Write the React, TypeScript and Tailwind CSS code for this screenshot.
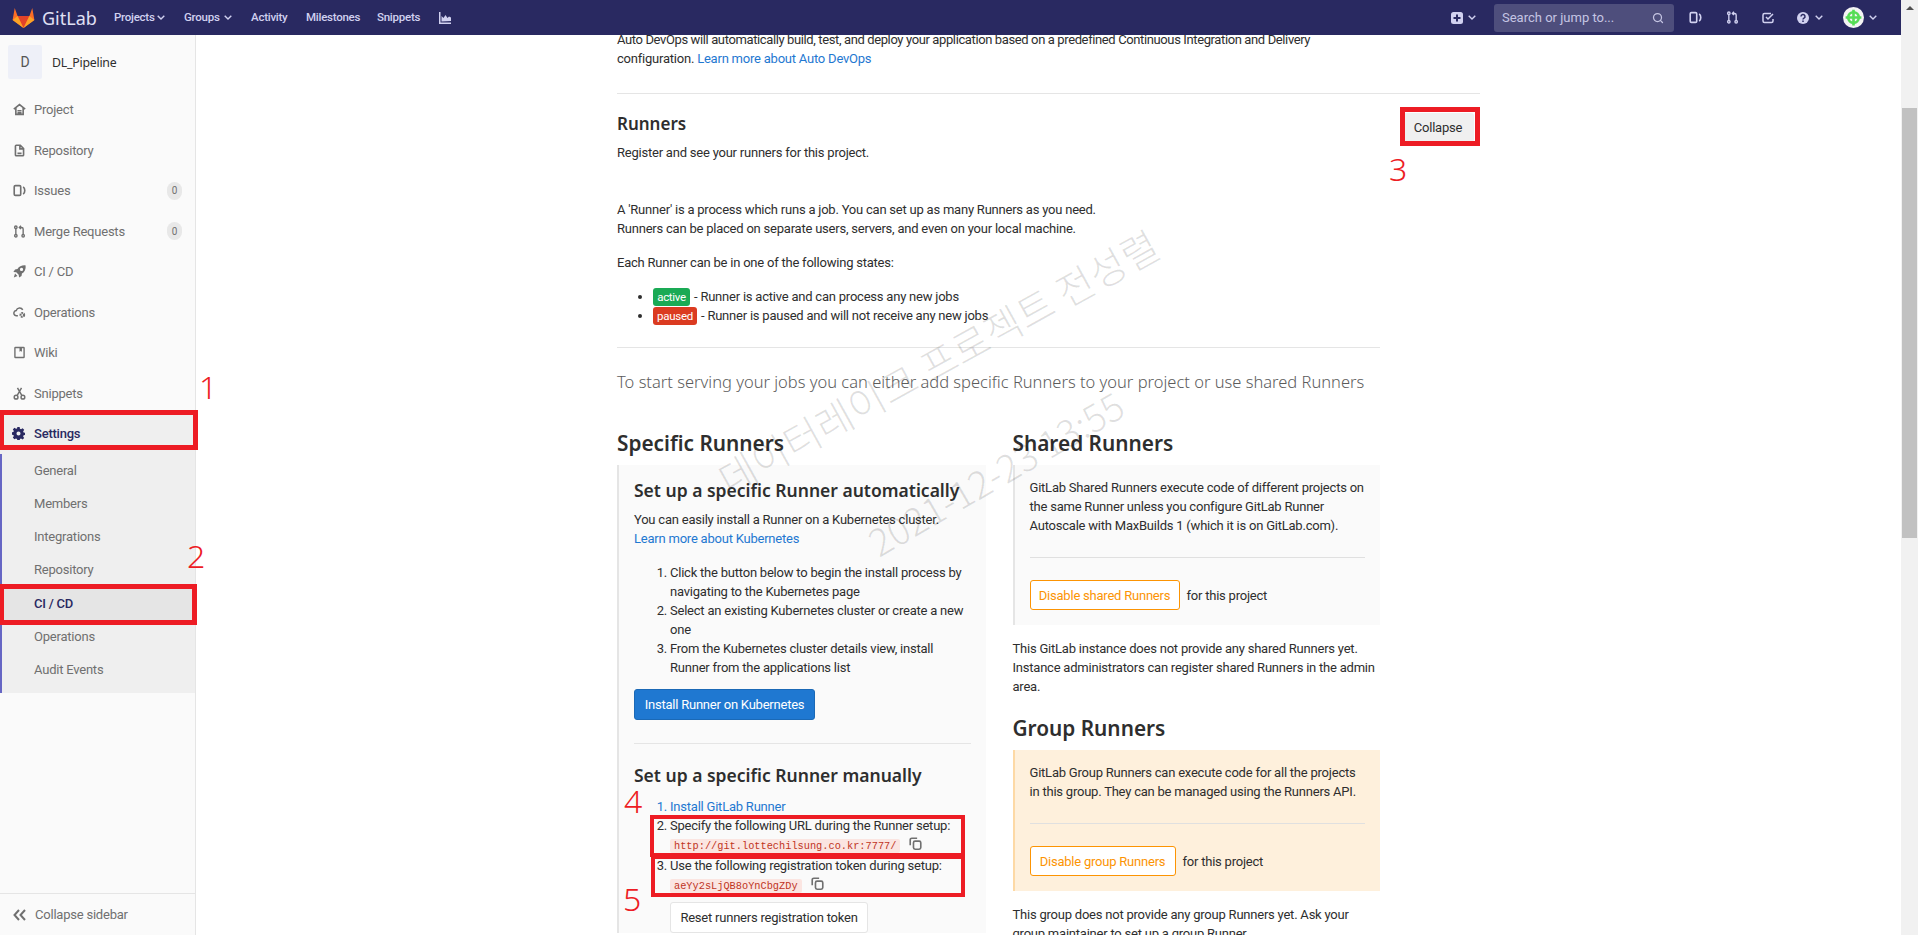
import { Search } from "lucide-react";
import type { ReactNode } from "react";

const BODY_FONT = "font-['Roboto','Noto_Sans',sans-serif]";
const HEADING_FONT = "font-['Noto_Sans','Open_Sans',sans-serif]";

const NAV_ICONS: Record<string, ReactNode> = {
  home: <path d="M1 7.500 8 2l7 5.500M3.500 6v8h9V6M5.500 9.500h5M5.500 12h5" fill="none" stroke="currentColor" strokeWidth="2" />,
  doc: <path d="M4 1.500h5l4 4v8a1 1 0 0 1-1 1H4a1 1 0 0 1-1-1v-11a1 1 0 0 1 1-1zM8.500 2v4h4.500M5.500 11.500h5" fill="none" stroke="currentColor" strokeWidth="2" />,
  issues: <g fill="none" stroke="currentColor" strokeWidth="2"><rect x="1.500" y="2" width="8" height="12" rx="1.500" /><path d="M12.500 3.500c1.500 1 2 2.500 2 4.500s-.5 3.500-2 4.500" /></g>,
  merge: <g fill="none" stroke="currentColor" strokeWidth="1.700"><circle cx="3.500" cy="2.800" r="1.500" /><circle cx="3.500" cy="13.200" r="1.500" /><circle cx="12.500" cy="13.200" r="1.500" /><path d="M3.500 4.500v7M12.500 11.500V5c0-1.200-.6-2-2-2H8M9.800 1 7.800 3l2 2" /></g>,
  rocket: <path d="M15.500.5c-4.500-.3-8 1-10 4.500l-3 .5L.5 8.500l3.500.5 3 3 .5 3.500 3-2 .5-3c3.500-2 5-5.500 4.500-10zM10.500 3.500a2 2 0 1 1 0 4 2 2 0 0 1 0-4zM2.500 10.500l3 3-4.500 2 1.500-5z" fill="currentColor" fillRule="evenodd" />,
  ops: <g fill="none" stroke="currentColor" strokeWidth="1.800"><path d="M6 12H4.500a3.200 3.200 0 0 1-.5-6.400A4.300 4.300 0 0 1 12 4.800" /><circle cx="11.500" cy="11" r="2.200" strokeWidth="2.600" strokeDasharray="2 .7" /></g>,
  book: <path d="M3 1h10a1.500 1.500 0 0 1 1.500 1.500v11A1.500 1.500 0 0 1 13 15H3a1.500 1.500 0 0 1-1.500-1.500v-11A1.500 1.500 0 0 1 3 1zm.2 1.700v10.600h9.600V2.700H11v4.300L9.500 6 8 7V2.700H3.200z" fill="currentColor" fillRule="evenodd" />,
  scissors: <g fill="none" stroke="currentColor" strokeWidth="1.800"><circle cx="3.800" cy="12.500" r="2.300" /><circle cx="12.200" cy="12.500" r="2.300" /><path d="M5 10.500 10.500 1M11 10.500 5.500 1" /></g>,
  gear: <path d="M6.600 0h2.800l.4 2.200 1.300.6L13 1.500l2 2-1.300 1.900.6 1.300 2.200.4v2.800l-2.200.4-.6 1.300 1.300 1.900-2 2-1.900-1.300-1.300.6-.4 2.200H6.600l-.4-2.200-1.300-.6L3 15l-2-2 1.300-1.900-.6-1.300L-.5 9.400V6.600l2.200-.4.600-1.300L1 3l2-2 1.900 1.300 1.300-.6.400-1.700zM8 5.500a2.500 2.500 0 1 0 0 5 2.500 2.500 0 0 0 0-5z" fill="currentColor" fillRule="evenodd" />,
};

function NavIcon({ name, className }: { name: string; className?: string }) {
  return (
    <svg viewBox="0 0 16 16" className={className} aria-hidden="true">
      {NAV_ICONS[name]}
    </svg>
  );
}

function Chevron({ className }: { className?: string }) {
  return (
    <svg width="8" height="5" viewBox="0 0 8 5" fill="none" stroke="currentColor" strokeWidth="1.400" className={className} aria-hidden="true">
      <path d="M.7.700 4 4 7.300.700" />
    </svg>
  );
}

function CopyIcon() {
  return (
    <svg width="13" height="13" viewBox="0 0 16 16" fill="none" stroke="#707070" strokeWidth="2" className="ml-[9px] inline-block align-[-1px]" aria-hidden="true">
      <path d="M10 1.500H3.500a2 2 0 0 0-2 2V10" />
      <rect x="5.500" y="5" width="9" height="10" rx="2" />
    </svg>
  );
}

const SIDEBAR_ITEMS = [
  { icon: "home", label: "Project" },
  { icon: "doc", label: "Repository" },
  { icon: "issues", label: "Issues", count: 0 },
  { icon: "merge", label: "Merge Requests", count: 0 },
  { icon: "rocket", label: "CI / CD" },
  { icon: "ops", label: "Operations" },
  { icon: "book", label: "Wiki" },
  { icon: "scissors", label: "Snippets" },
];

const SETTINGS_ITEMS = ["General", "Members", "Integrations", "Repository", "CI / CD", "Operations", "Audit Events"];

function Sidebar() {
  return (
    <aside className="flex h-[900px] w-[196px] shrink-0 flex-col border-r border-[#e5e5e5] bg-[#fafafa] text-[13px]">
      <div className="flex items-center gap-[10px] pl-2 pt-[10px] pb-[10px]">
        <div className="flex h-[34px] w-[34px] items-center justify-center rounded-[2px] bg-[#eef0f8] text-[14px] text-[#555]">D</div>
        <span className={`${HEADING_FONT} text-[12.300px] text-[#2e2e2e]`}>DL_Pipeline</span>
      </div>
      <div className="pt-[0.500px]">
        {SIDEBAR_ITEMS.map((item) => (
          <div key={item.label} className="flex h-[40.500px] items-center pl-[13px] pr-[13px] text-[#707070]">
            <NavIcon name={item.icon} className="mr-[8px] h-[13px] w-[13px] text-[#707070]" />
            <span className="flex-1">{item.label}</span>
            {item.count !== undefined && (
              <span className="flex h-[18px] w-[15px] items-center justify-center rounded-full bg-[#e8e8e8] text-[10px]">{item.count}</span>
            )}
          </div>
        ))}
      </div>
      <div className="flex h-[40px] items-center bg-[#efefef] pl-[12px] font-medium text-[#292961]">
        <NavIcon name="gear" className="mr-[9px] h-[13px] w-[13px]" />
        Settings
      </div>
      <div className="border-l-2 border-[#6666c4] bg-[#efefef] pb-[7px]">
        {SETTINGS_ITEMS.map((label) => (
          <div
            key={label}
            className={`flex h-[33.250px] items-center pl-[32px] ${label === "CI / CD" ? "bg-[#e5e5e5] font-medium text-[#292961]" : "text-[#707070]"}`}
          >
            {label}
          </div>
        ))}
      </div>
      <div className="mt-auto flex h-[42px] items-center border-t border-[#e5e5e5] pl-[13px] text-[#707070]">
        <svg width="13" height="12" viewBox="0 0 13 12" fill="none" stroke="#707070" strokeWidth="2" className="mr-[9px]" aria-hidden="true">
          <path d="M6 1 1.500 6 6 11M12 1 7.500 6l4.500 5" />
        </svg>
        Collapse sidebar
      </div>
    </aside>
  );
}

function Header() {
  return (
    <header className="relative z-20 flex h-[35px] shrink-0 items-center bg-[#292961] text-[11.500px] font-medium tracking-[-0.250px] text-[#d1d1f0]">
      <svg width="23" height="21" viewBox="0 0 24 22" className="ml-3" aria-hidden="true">
        <path d="M12 22 0.600 13.500 2.800 1l3 8.500h12.400l3-8.500 2.200 12.500z" fill="#fc6d26" />
        <path d="M12 22 5.800 9.500h12.400z" fill="#e24329" />
        <path d="M12 22 0.600 13.500 5.800 9.500z" fill="#fca326" />
        <path d="M12 22l11.400-8.500-5.200-4z" fill="#fca326" />
      </svg>
      <span className={`${HEADING_FONT} ml-[7px] w-[72px] text-[18px] font-normal leading-none tracking-normal text-[#e0e0f5]`}>GitLab</span>
      <span className="flex w-[51px] items-center justify-between">Projects<Chevron /></span>
      <span className="ml-[19px] flex w-[48px] items-center justify-between">Groups<Chevron /></span>
      <span className="ml-[19px] w-[37px]">Activity</span>
      <span className="ml-[18px] w-[53px]">Milestones</span>
      <span className="ml-[18px] w-[42px]">Snippets</span>
      <svg width="12" height="12" viewBox="0 0 12 12" fill="currentColor" className="ml-[20px]" aria-hidden="true">
        <path d="M0 0h1.500v10.500H12V12H0zM2.500 9.500V4l2 2 2-3 2 3 1.500-1.500 2 1v3.500z" />
      </svg>
      <div className="ml-auto flex items-center pr-[24px]">
        <svg width="12" height="12" viewBox="0 0 12 12" aria-hidden="true">
          <rect width="12" height="12" rx="2.500" fill="#d1d1f0" />
          <path d="M6 2.500v7M2.500 6h7" stroke="#292961" strokeWidth="2" />
        </svg>
        <Chevron className="ml-[5px]" />
        <div className="ml-[18px] flex h-[28px] w-[180px] items-center justify-between rounded-[3px] bg-[#4e4e7c] pl-[8px] pr-[10px] text-[13px] font-normal tracking-normal text-[#c5c5e3]">
          Search or jump to...
          <Search className="h-[12px] w-[12px]" strokeWidth={2.500} />
        </div>
        <NavIcon name="issues" className="ml-[15px] h-[13px] w-[13px]" />
        <NavIcon name="merge" className="ml-[24px] h-[13px] w-[13px]" />
        <svg width="12" height="12" viewBox="0 0 12 12" fill="none" stroke="currentColor" strokeWidth="1.500" className="ml-[23px]" aria-hidden="true">
          <path d="M9 1.500H2.500a1.500 1.500 0 0 0-1.500 1.500v6a1.500 1.500 0 0 0 1.500 1.500h7A1.500 1.500 0 0 0 11 9V7M4 5l2 2 5-5" />
        </svg>
        <svg width="12" height="12" viewBox="0 0 12 12" className="ml-[23px]" aria-hidden="true">
          <circle cx="6" cy="6" r="6" fill="currentColor" />
          <path d="M4 4.500a2 2 0 1 1 3 1.700c-.7.400-1 .800-1 1.300M6 8.500v1.500" stroke="#292961" strokeWidth="1.500" fill="none" />
        </svg>
        <Chevron className="ml-[6px]" />
        <svg width="21" height="21" viewBox="0 0 20 20" className="ml-[20px]" aria-hidden="true">
          <circle cx="10" cy="10" r="10" fill="#f4f4f4" />
          <path d="M10 2.500v15M2.500 10h15" stroke="#55dd55" strokeWidth="2.500" />
          <circle cx="10" cy="10" r="5" fill="none" stroke="#55dd55" strokeWidth="2.500" />
        </svg>
        <Chevron className="ml-[5px]" />
      </div>
    </header>
  );
}

function Badge({ className, children }: { className: string; children: ReactNode }) {
  return <span className={`mr-[4px] inline-block rounded-[3px] text-center text-[11.500px] leading-[18px] tracking-[-0.300px] text-white ${className}`}>{children}</span>;
}

function Code({ children }: { children: ReactNode }) {
  return <code className="rounded-[2px] bg-[#fbe5e1] px-[4px] py-[1px] font-['Liberation_Mono',monospace] text-[10.300px] tracking-normal text-[#c0341d]">{children}</code>;
}

function SpecificRunners() {
  return (
    <div className="w-[369px]">
      <h3 className={`${HEADING_FONT} text-[20.800px] font-semibold leading-[29px] tracking-normal text-[#2e2e2e]`}>Specific Runners</h3>
      <div className="mt-[7px] border-l-2 border-[#e5e5e5] bg-[#fafafa] px-[15px] pt-[13px]">
        <h4 className={`${HEADING_FONT} text-[17.500px] font-semibold leading-[24px] tracking-normal text-[#2e2e2e]`}>Set up a specific Runner automatically</h4>
        <p className="mt-[8px]">You can easily install a Runner on a Kubernetes cluster.<br /><span className="text-[#1f78d1]">Learn more about Kubernetes</span></p>
        <ol className="mt-[15px] list-decimal pl-[36px]">
          <li>Click the button below to begin the install process by navigating to the Kubernetes page</li>
          <li>Select an existing Kubernetes cluster or create a new one</li>
          <li>From the Kubernetes cluster details view, install Runner from the applications list</li>
        </ol>
        <div className="mt-[12px] flex h-[31px] w-[181px] items-center justify-center rounded-[3px] border border-[#1b69b6] bg-[#1f78d1] text-white">Install Runner on Kubernetes</div>
        <div className="mt-[23px] border-t border-[#e5e5e5]" />
        <h4 className={`${HEADING_FONT} mt-[19px] text-[17.500px] font-semibold leading-[24px] tracking-normal text-[#2e2e2e]`}>Set up a specific Runner manually</h4>
        <ol className="mt-[10px] list-decimal pl-[36px]">
          <li className="text-[#1f78d1]"><span>Install GitLab Runner</span></li>
          <li>Specify the following URL during the Runner setup:<br /><Code>http://git.lottechilsung.co.kr:7777/</Code><CopyIcon /></li>
          <li>Use the following registration token during setup:<br /><Code>aeYy2sLjQB8oYnCbgZDy</Code><CopyIcon /></li>
        </ol>
        <div className="ml-[36px] mt-[6px] flex h-[31px] w-[198px] items-center justify-center rounded-[3px] border border-[#e5e5e5] bg-white">Reset runners registration token</div>
      </div>
    </div>
  );
}

function RunnerBox({ tone, text, button, buttonWidth }: { tone: "gray" | "orange"; text: string; button: string; buttonWidth: string }) {
  return (
    <div className={`mt-[7px] border-l-2 px-[15px] pb-[15px] pt-[13px] ${tone === "gray" ? "border-[#e5e5e5] bg-[#fafafa]" : "border-[#fdd9a5] bg-[#fef0dc]"}`}>
      <p>{text}</p>
      <div className="mt-[22px] border-t border-[#e0e0e0]" />
      <div className="mt-[22px] flex items-center gap-[7px]">
        <div className={`flex h-[30px] items-center justify-center rounded-[3px] border border-[#fc9403] bg-white text-[#fc9403] ${buttonWidth}`}>{button}</div>
        for this project
      </div>
    </div>
  );
}

function SharedRunners() {
  return (
    <div className="w-[368px]">
      <h3 className={`${HEADING_FONT} text-[20.800px] font-semibold leading-[29px] tracking-normal text-[#2e2e2e]`}>Shared Runners</h3>
      <RunnerBox tone="gray" text="GitLab Shared Runners execute code of different projects on the same Runner unless you configure GitLab Runner Autoscale with MaxBuilds 1 (which it is on GitLab.com)." button="Disable shared Runners" buttonWidth="w-[150px]" />
      <p className="mt-[14px]">This GitLab instance does not provide any shared Runners yet. Instance administrators can register shared Runners in the admin area.</p>
      <h3 className={`${HEADING_FONT} mt-[18px] text-[20.800px] font-semibold leading-[29px] tracking-normal text-[#2e2e2e]`}>Group Runners</h3>
      <RunnerBox tone="orange" text="GitLab Group Runners can execute code for all the projects in this group. They can be managed using the Runners API." button="Disable group Runners" buttonWidth="w-[146px]" />
      <p className="mt-[14px]">This group does not provide any group Runners yet. Ask your group maintainer to set up a group Runner.</p>
    </div>
  );
}

// annotation boxes and numbers drawn over the page
function Callout({ className }: { className: string }) {
  return <div className={`absolute border-[#ed1c24] ${className}`} />;
}

function Num({ className, children }: { className: string; children: ReactNode }) {
  return <span className={`${HEADING_FONT} absolute text-[32px] font-light leading-none tracking-normal text-[#ed1c24] ${className}`}>{children}</span>;
}

export default function App() {
  return (
    <div className={`relative flex h-[935px] w-[1918px] overflow-hidden bg-white leading-[19px] ${BODY_FONT} text-[13px] tracking-[-0.220px] text-[#2e2e2e]`}>
      <div className="flex min-w-0 flex-1 flex-col">
        <Header />
        <div className="flex min-h-0 flex-1">
          <Sidebar />
          <main className="-mt-[5px] min-w-0 flex-1 pl-[421px]">
            <section className="w-[864px] pr-px">
              <p><span className="tracking-[-0.380px]">Auto DevOps will automatically build, test, and deploy your application based on a predefined Continuous Integration and Delivery</span><br />configuration. <span className="text-[#1f78d1]">Learn more about Auto DevOps</span></p>
              <div className="mt-[25px] border-t border-[#e5e5e5]" />
              <div className="flex justify-between pt-[18px]">
                <div>
                  <h2 className={`${HEADING_FONT} text-[17px] font-semibold leading-[24px] tracking-normal`}>Runners</h2>
                  <p className="mt-[7px]">Register and see your runners for this project.</p>
                </div>
                <div className="mr-[6px] mt-[1px] flex h-[29px] w-[72px] items-center justify-center rounded-[3px] bg-[#f0f0f0]">Collapse</div>
              </div>
            </section>
            <section className="mt-[38px] w-[763px]">
              <p>A 'Runner' is a process which runs a job. You can set up as many Runners as you need.<br />Runners can be placed on separate users, servers, and even on your local machine.</p>
              <p className="mt-[15px]">Each Runner can be in one of the following states:</p>
              <ul className="mt-[15px] list-disc pl-[36px]">
                <li><Badge className="w-[37px] bg-[#1aaa55]">active</Badge>- Runner is active and can process any new jobs</li>
                <li><Badge className="w-[44px] bg-[#db3b21]">paused</Badge>- Runner is paused and will not receive any new jobs</li>
              </ul>
              <div className="mt-[22px] border-t border-[#e5e5e5]" />
              <p className={`${HEADING_FONT} mt-[24px] text-[16.500px] font-light leading-[20px] tracking-normal text-[#5c5c5c]`}>To start serving your jobs you can either add specific Runners to your project or use shared Runners</p>
              <div className="mt-[37px] flex gap-[27px]">
                <SpecificRunners />
                <SharedRunners />
              </div>
            </section>
          </main>
        </div>
      </div>
      <div className="flex w-[17px] shrink-0 flex-col items-center bg-[#f1f1f1]">
        <span className="mt-[6px] h-0 w-0 border-x-[4px] border-b-[4px] border-x-transparent border-b-[#505050]" />
        <span className="mt-[98px] h-[430px] w-[15px] bg-[#c1c1c1]" />
      </div>

      <div className="pointer-events-none absolute left-[938px] top-[361px] -translate-x-1/2 -translate-y-1/2 -rotate-[29deg] whitespace-nowrap font-['Noto_Sans_CJK_KR',sans-serif] text-[40px] font-light tracking-normal text-black/[0.12]">데이터레이크 프로젝트 전성렬</div>
      <div className="pointer-events-none absolute left-[995px] top-[472px] -translate-x-1/2 -translate-y-1/2 -rotate-[30deg] whitespace-nowrap font-['Noto_Sans_CJK_KR',sans-serif] text-[38px] font-light tracking-normal text-black/[0.12]">2021-12-23 13:55</div>

      <Callout className="-left-px top-[410px] h-[40px] w-[199px] border-[5px]" />
      <Callout className="-left-px top-[584px] h-[41px] w-[198px] border-[5px]" />
      <Callout className="left-[1400px] top-[107px] h-[39px] w-[80px] border-[5px]" />
      <Callout className="left-[650px] top-[815px] h-[42px] w-[315px] border-[4px]" />
      <Callout className="left-[651px] top-[855px] h-[42px] w-[314px] border-[4px]" />
      <Num className="left-[199px] top-[371px]">1</Num>
      <Num className="left-[187px] top-[540px]">2</Num>
      <Num className="left-[1389px] top-[153px]">3</Num>
      <Num className="left-[624px] top-[785px]">4</Num>
      <Num className="left-[623px] top-[883px]">5</Num>
    </div>
  );
}
